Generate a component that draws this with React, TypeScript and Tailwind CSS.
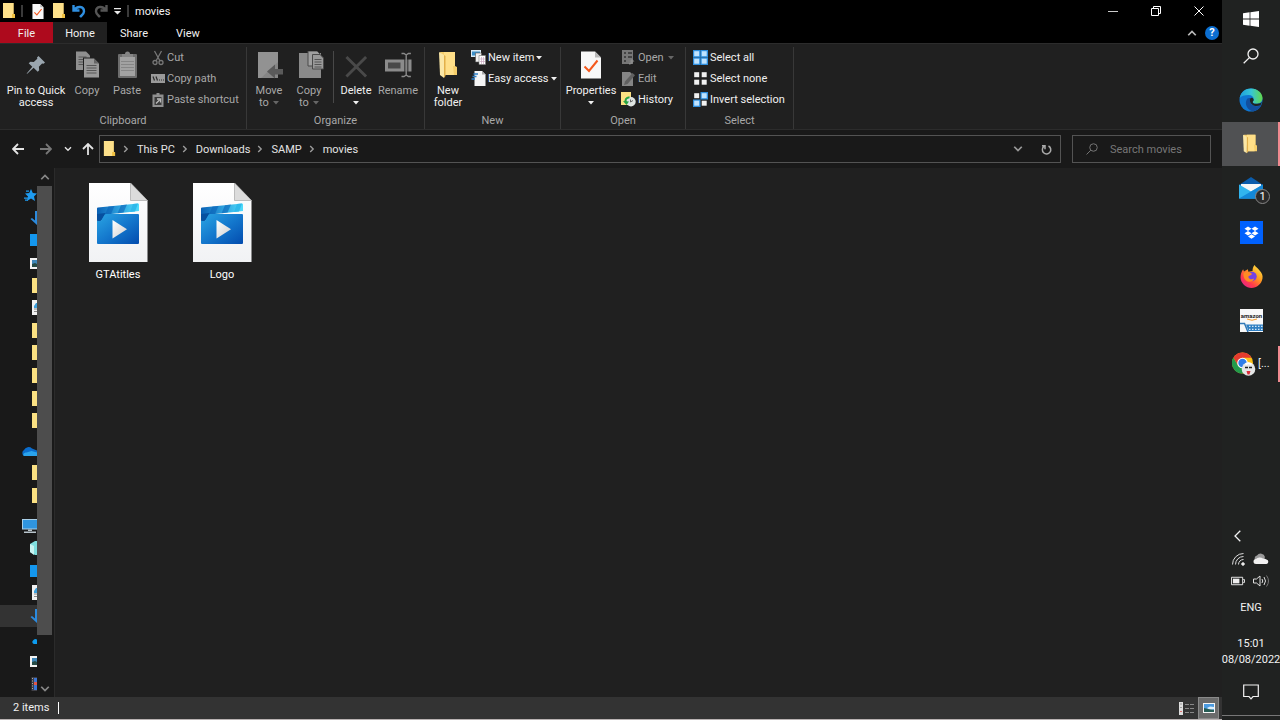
import { useState } from "react";
import type { ReactNode } from "react";

type IconProps = { className?: string };

type SmallAction = {
  label: string;
  icon: ReactNode;
  muted?: boolean;
  caret?: boolean;
};

const TABS = ["Home", "Share", "View"];
const CRUMBS = ["This PC", "Downloads", "SAMP", "movies"];
const FILES = ["GTAtitles", "Logo"];

/* ---------- icons ---------- */

function FolderIcon({ className = "h-4 w-3.5" }: IconProps) {
  return (
    <svg viewBox="0 0 14 16" className={className} preserveAspectRatio="none">
      <path d="M1 0h10.5v11.5H13V15H1z" fill="#f5cf5e" />
      <path d="M1 0h10.5v11H10V15H1z" fill="#fde08a" />
      <path d="M10 15v-4h3v4z" fill="#f0c040" />
    </svg>
  );
}

function OpenFolderIcon({ className }: IconProps) {
  return (
    <svg viewBox="0 0 18 28" className={className} preserveAspectRatio="none">
      <path d="M1 1h15v14l2 1v8H6z" fill="#f7cf6b" />
      <path d="M5 1h11v14h-2l1 9H5z" fill="#ffdf88" />
      <path d="M0 1l5 3v23l-4-3z" fill="#fbe7a6" />
      <path d="M5 4v23l1.500-2V5z" fill="#e2b04a" />
    </svg>
  );
}

function CheckPageIcon({ className }: IconProps) {
  return (
    <svg viewBox="0 0 20 27" className={className}>
      <path d="M0 0h14l6 6v21H0z" fill="#f8f8f8" />
      <path d="M14 0v6h6z" fill="#b9b9b9" />
      <path d="M3.500 15l4.500 4.500L16.500 9" fill="none" stroke="#f4581c" strokeWidth="2" />
    </svg>
  );
}

function Caret({ className = "" }: IconProps) {
  return (
    <svg viewBox="0 0 6 4" className={`h-1 w-1.5 shrink-0 ${className}`}>
      <path d="M0 0h6L3 3.500z" fill="currentColor" />
    </svg>
  );
}

function Chevron({ className = "" }: IconProps) {
  return (
    <svg viewBox="0 0 8 8" className={className} fill="none" stroke="currentColor" strokeWidth="1.400">
      <path d="M1 2.200l3 3 3-3" />
    </svg>
  );
}

function PinIcon() {
  return (
    <svg viewBox="0 0 20 20" className="mt-1 h-5 w-5">
      <path d="M12.500 1L19 7.500l-1.500 1.300-1.400-.4-3.200 3.400.3 3.400-1.500 1.500-4.100-4L1.500 18.500.6 19l.5-1 5.200-6.200-3.600-3.600 1.700-1.500 3.400.2 3.500-3.200-.3-1.200z" fill="#9aa6af" />
    </svg>
  );
}

function CopyIcon() {
  return (
    <svg viewBox="0 0 23 27" className="h-[27px] w-[23px]">
      <path d="M0 .5h10l4 4V19H0z" fill="#8f8f8f" />
      <path d="M2.500 6h8M2.500 8.500h8M2.500 11h8M2.500 13.500h8" stroke="#555" />
      <g transform="translate(8 7.500)">
        <path d="M-1-1h11.500l5 5v16H-1z" fill="#202020" />
        <path d="M0 0h10l5 5v14H0z" fill="#999" />
        <path d="M10 0v5h5z" fill="#666" />
        <path d="M2.500 7h10M2.500 9.500h10M2.500 12h10M2.500 14.500h10" stroke="#575757" />
      </g>
    </svg>
  );
}

function PasteIcon() {
  return (
    <svg viewBox="0 0 19 27" className="h-[27px] w-[19px]">
      <rect y="3" width="19" height="24" rx="1" fill="#6d6d6d" />
      <rect x="2" y="6" width="15" height="19" fill="#a2a2a2" />
      <path d="M4 6V3h3a2.500 2.500 0 0 1 5 0h3v3z" fill="#858585" />
      <path d="M3 10.500h13M3 13.500h13M3 16.500h13M3 19.500h13" stroke="#868686" />
    </svg>
  );
}

function ScissorsIcon() {
  return (
    <svg viewBox="0 0 14 16" className="h-4 w-3.5" fill="none" stroke="#777" strokeWidth="1.300">
      <path d="M3.500 1l5.500 10M10.500 1L5 11" />
      <circle cx="4" cy="12.500" r="2" />
      <circle cx="10" cy="12.500" r="2" />
    </svg>
  );
}

function CopyPathIcon() {
  return (
    <svg viewBox="0 0 14 9" className="h-[9px] w-3.5">
      <path d="M0 0h14v9H0z" fill="#9a9a9a" />
      <path d="M2 2.500l1.500 4M5 2.500l1.500 4M8 6h1M10 6h1M12 6h1" stroke="#2b2b2b" strokeWidth="1.200" />
    </svg>
  );
}

function PasteShortcutIcon() {
  return (
    <svg viewBox="0 0 12 14" className="h-3.5 w-3">
      <path d="M.5 1.500h4V0h3v1.500h4V14H.5z" fill="#8f8f8f" />
      <path d="M2.500 4h7v8h-7z" fill="#3a3a3a" />
      <path d="M4 10.500L7.500 7M5 6h3.500v3.500" fill="none" stroke="#bbb" strokeWidth="1.300" />
    </svg>
  );
}

function MoveToIcon() {
  return (
    <svg viewBox="0 0 25 28" className="ml-0.5 h-7 w-[25px]">
      <path d="M0 1h20v26H0z" fill="#858585" />
      <path d="M0 1h20v10L3 27H0z" fill="#929292" />
      <path d="M9 20.500l8-7v4.500h8v5.500h-8V27.500z" fill="#5a5a5a" />
    </svg>
  );
}

function CopyToIcon() {
  return (
    <svg viewBox="0 0 25 28" className="ml-1 h-7 w-[25px]">
      <path d="M0 2h22v25H0z" fill="#8a8a8a" />
      <path d="M9 0h9l3 3v12H9z" fill="#a0a0a0" stroke="#4a4a4a" />
      <path d="M13.500 3.500h7.500l3.500 3.500v11h-11z" fill="#999" stroke="#4a4a4a" />
      <path d="M15.500 8.500h7M15.500 11h7M15.500 13.500h7M15.500 16h7" stroke="#555" />
    </svg>
  );
}

function DeleteIcon() {
  return (
    <svg viewBox="0 0 24 24" className="mt-1 h-[23px] w-[23px]">
      <path d="M1.500 2L22 22.500M22 2L1.500 22.500" stroke="#494949" strokeWidth="3" />
    </svg>
  );
}

function RenameIcon() {
  return (
    <svg viewBox="0 0 27 27" className="h-[27px] w-[27px]">
      <path d="M0 8.500h26.500v12H0z" fill="#8b8b8b" />
      <path d="M3 11.500h12.500v6H3z" fill="#484848" />
      <path d="M19 8h4.500v13H19z" fill="#202020" opacity=".6" />
      <path d="M16.500 2.500h2.500l2.200 1.500 2.200-1.500h2.500M21.200 4v20M16.500 25.500h2.500l2.200-1.500 2.200 1.500h2.500" fill="none" stroke="#8a8a8a" strokeWidth="1.400" />
    </svg>
  );
}

function NewItemIcon() {
  return (
    <svg viewBox="0 0 15 15" className="h-[15px] w-[15px]">
      <path d="M0 0h10v7H0z" fill="#d9ebf6" />
      <path d="M1 1.500h8v4H1z" fill="#3b8fc8" />
      <path d="M4.500 3h6v9h-6z" fill="#f2f2f2" stroke="#555" strokeWidth=".6" />
      <path d="M8 5.500h6.500v9H8z" fill="#fff" stroke="#777" strokeWidth=".6" />
      <path d="M9 9h5M9 11.500h5M10.500 7v7M12.500 7v7" stroke="#c9a8c0" strokeWidth=".7" />
    </svg>
  );
}

function EasyAccessIcon() {
  return (
    <svg viewBox="0 0 14 15" className="h-[15px] w-[15px]">
      <path d="M3 0h7.500L14 3.500V15H3z" fill="#f4f4f4" />
      <path d="M10.500 0v3.500H14z" fill="#aaa" />
      <path d="M2 3h4.500M1 5.500h4M0 8h3.500" stroke="#2f80c8" strokeWidth="1.400" />
    </svg>
  );
}

function OpenIcon() {
  return (
    <svg viewBox="0 0 13 15" className="h-[15px] w-[13px]">
      <path d="M0 0h11v14H0z" fill="#777" />
      <path d="M2 2h2v2H2zM2 6h2v2H2zM2 10h2v2H2zM6 2h4v2H6zM6 6h4v2H6z" fill="#444" />
      <path d="M7 14.500v-1.500q2 0 2-1.500H7.500L10 9l2.500 2.500H11q0 3-4 3z" fill="#8c8c8c" />
    </svg>
  );
}

function EditIcon() {
  return (
    <svg viewBox="0 0 13 15" className="h-[15px] w-[13px]">
      <path d="M0 1h8l3 3v11H0z" fill="#858585" />
      <path d="M2 14l1-3.500L10.500 2l2.500 2.200L5.500 13z" fill="#606060" />
    </svg>
  );
}

function HistoryIcon() {
  return (
    <svg viewBox="0 0 15 15" className="h-[15px] w-[15px]">
      <path d="M0 0h10v13H0z" fill="#fbe183" />
      <circle cx="10" cy="9.800" r="4.700" fill="#dfe5e3" />
      <path d="M9.500 7.500V10l2.500-1.500" fill="none" stroke="#666" />
      <path d="M8.500 5.200C5 5.500 3.800 8 5 10.500" fill="none" stroke="#27a344" strokeWidth="2" />
      <path d="M2 9l6 .5L5.500 13z" fill="#27a344" />
    </svg>
  );
}

function SelectIcon({ filled }: { filled: boolean[] }) {
  return (
    <svg viewBox="0 0 15 15" className="h-[15px] w-[15px]">
      {filled.map((on, i) => {
        const x = (i % 2) * 7.5;
        const y = i > 1 ? 7.5 : 0;
        return (
          <g key={i}>
            {on && <rect x={x} y={y} width="7.500" height="7.500" fill="#2f8fdf" />}
            <rect x={x + 1.2} y={y + 1.2} width="5" height="5" fill={on ? "#bfe3ff" : "#f1f1f1"} />
          </g>
        );
      })}
    </svg>
  );
}

function SearchIcon({ className }: IconProps) {
  return (
    <svg viewBox="0 0 16 16" className={className} fill="none" stroke="currentColor" strokeWidth="1.300">
      <circle cx="10" cy="6" r="5" />
      <path d="M6.400 9.600L.7 15.300" />
    </svg>
  );
}

function ArrowIcon({ className }: IconProps) {
  return (
    <svg viewBox="0 0 12 12" className={className} fill="none" stroke="currentColor" strokeWidth="1.800">
      <path d="M12 6H1.500M6 1L1 6l5 5" />
    </svg>
  );
}

function VideoFileIcon() {
  return (
    <svg viewBox="0 0 59 80" className="h-20 w-[59px]">
      <defs>
        <linearGradient id="page" x2="0" y2="1">
          <stop stopColor="#fff" />
          <stop offset="1" stopColor="#f1f2f4" />
        </linearGradient>
        <linearGradient id="clip" x2="1" y2="1">
          <stop stopColor="#2aa5e3" />
          <stop offset=".5" stopColor="#1478cd" />
          <stop offset="1" stopColor="#034cae" />
        </linearGradient>
        <linearGradient id="band">
          <stop stopColor="#0960b4" />
          <stop offset=".5" stopColor="#2b9ddc" />
          <stop offset="1" stopColor="#4fdcfb" />
        </linearGradient>
        <linearGradient id="play" x2="1" y2="1">
          <stop stopColor="#fff" />
          <stop offset="1" stopColor="#cfcfcf" />
        </linearGradient>
      </defs>
      <path d="M0 0h41.500L58.500 17.500V79H0z" fill="url(#page)" />
      <path d="M41.500 0v17.500h17z" fill="#dcdcdc" stroke="#a8a8a8" strokeWidth=".7" />
      <path d="M9 24.500L49 20.500q1 0 1 1V28L18 31.500 12 38H9q-1 0-1-1V25.500q0-1 1-1z" fill="url(#band)" />
      <path d="M8 31l8.500-1L12.500 37q-.5 1-1.500 1H9q-1 0-1-1z" fill="#06509f" />
      <path d="M19.500 23.500l6-.6-3.500 8-6 .7zM32 22.200l6-.6-3.500 8-6 .7z" fill="#0a62b8" opacity=".6" />
      <path d="M44 21l5-.5-3 8-5 .5z" fill="#2fb9ea" />
      <path d="M17.500 31H49q1 0 1 1v28q0 1-1 1H9q-1 0-1-1V38h3q1 0 1.500-1l3-5q.700-1 2-1z" fill="url(#clip)" />
      <path d="M23.500 37L38 46.200 23.500 55.500z" fill="url(#play)" />
    </svg>
  );
}

function EdgeIcon() {
  return (
    <svg viewBox="0 0 24 24" className="h-6 w-6">
      <defs>
        <linearGradient id="edgeTop">
          <stop stopColor="#1d9fdc" />
          <stop offset=".5" stopColor="#36c5d6" />
          <stop offset="1" stopColor="#62d94a" />
        </linearGradient>
      </defs>
      <circle cx="12" cy="12" r="11.500" fill="#0f76d2" />
      <path d="M.7 10C2 3.500 6.500.5 12 .5 18.500.5 23.500 5 23.500 10c0 3.500-2.500 5.700-5.800 5.700-3 0-4.200-1-4-2 .2-.7 1-1 1-2.700 0-2-2-4-5-4C5.500 7 2 8 .7 10z" fill="url(#edgeTop)" />
      <path d="M8 11c-3 5 .5 11 5.500 12.300 4-.3 7.200-2.500 8.800-5.500.2-.6-.3-.8-.8-.5-5 2.500-10.500-.5-10.500-4.300 0-1.500 1-2.500 1.500-3-2-.2-3.500 0-4.500 1z" fill="#124f9e" />
      <path d="M11 13c-.3-2 .5-3 1.700-3.300 1.500.3 2 1.300 2 2.300 0 1-1 1.300-1 2 0 1.300 2 2.200 4.500 1.700 2.500 0 4-.8 5-2L21.500 17.300c-5 2.200-10.200-.5-10.500-4.300z" fill="#202322" />
    </svg>
  );
}

function MailIcon() {
  return (
    <svg viewBox="0 0 24 22" className="h-[22px] w-6">
      <path d="M0 8L12 0l12 8v13.500H0z" fill="#0b5cab" />
      <path d="M2 7h20v8H2z" fill="#f6f6f6" />
      <path d="M0 7.500l12 7 12-7v14H0z" fill="#31b4ee" />
      <path d="M0 21.500L24 7.500v14z" fill="#1388d8" />
    </svg>
  );
}

function DropboxIcon() {
  return (
    <svg viewBox="0 0 23 23" className="h-[23px] w-[23px]">
      <path d="M0 0h23v23H0z" fill="#0061fe" />
      <path d="M8 5.500l3.500 2.300L8 10 4.500 7.800zM15 5.500l3.500 2.300L15 10l-3.500-2.200zM8 10l3.500 2.300L8 14.500l-3.500-2.200zM15 10l3.500 2.300-3.500 2.200-3.500-2.200zM11.500 13.200l3.500 2.200-3.500 2.300L8 15.400z" fill="#fff" />
    </svg>
  );
}

function FirefoxIcon() {
  return (
    <svg viewBox="0 0 22 22" className="h-[23px] w-[23px]">
      <defs>
        <linearGradient id="fox" x1="1" x2=".2" y2="1">
          <stop stopColor="#fff44f" />
          <stop offset=".45" stopColor="#ff9a1f" />
          <stop offset=".75" stopColor="#ff3b4a" />
          <stop offset="1" stopColor="#e5238b" />
        </linearGradient>
      </defs>
      <path d="M14 0c1 2 3 3 4.500 5C21 7.500 22 10 21.500 13 20.500 18.500 16 22 11 22S.5 17.500.5 12C.5 9 1.500 6 3 4l.8 2.300L7.500 4l.5 2.500 4-.8C12 3.500 12.500 1.500 14 0z" fill="url(#fox)" />
      <circle cx="11.500" cy="11" r="4.500" fill="#7542e5" />
      <path d="M3.500 7.500c3-1.500 6-1 8 1-1 1.500-3 1.500-3.500 2.500 0 2.500 3 3.500 5.500 2-1 3.500-5.500 4-8 1.500C3.500 13 3 10 3.500 7.500z" fill="#ff8b23" />
    </svg>
  );
}

function AmazonIcon() {
  return (
    <svg viewBox="0 0 23 23" className="h-[23px] w-[23px]">
      <path d="M0 0h23v23H0z" fill="#f8f8f8" />
      <text x="11.500" y="8.500" textAnchor="middle" fontSize="6" fontWeight="700" fill="#222">amazon</text>
      <path d="M7 10q5 2.500 10 0" fill="none" stroke="#f39a2b" />
      <path d="M0 14.500h4.500l3.500 8.500" fill="none" stroke="#3279b7" strokeWidth="1.500" />
      <path d="M6 15.500H23V22H8.500z" fill="#2f7fc2" />
      <path d="M9 17.300h14M9 20.300h14" stroke="#d5e7f4" strokeWidth="1.200" strokeDasharray="1.500 1.500" />
    </svg>
  );
}

function ChromeIcon() {
  return (
    <svg viewBox="0 0 24 24" className="h-6 w-6 shrink-0">
      <circle cx="10.500" cy="11" r="10.500" fill="#fbc116" />
      <path d="M1.400 5.700A10.500 10.500 0 0 1 19.600 5.700H10.500L6 13.600z" fill="#e33b2e" />
      <path d="M1.400 5.700A10.500 10.500 0 0 0 10.500 21.500L15 13.600H6z" fill="#229a4b" />
      <circle cx="10.500" cy="11" r="5.300" fill="#fff" />
      <circle cx="10.500" cy="11" r="4.200" fill="#2e7de9" />
      <circle cx="16.500" cy="17" r="6.800" fill="#e4e6e6" />
      <path d="M13 15.500h3M17 15.500h3" stroke="#222" strokeWidth="1.500" />
      <path d="M14.500 19h4l-1 3.500h-2z" fill="#d92f3a" />
      <path d="M13.500 12.500q3-2.500 6 0" fill="none" stroke="#fff" strokeWidth="2" />
    </svg>
  );
}

/* ---------- ribbon ---------- */

function BigButton({
  icon,
  lines,
  width,
  muted,
  caret,
}: {
  icon: ReactNode;
  lines: string[];
  width: string;
  muted?: boolean;
  caret?: "below" | "inline";
}) {
  return (
    <button
      type="button"
      className={`flex h-full shrink-0 flex-col items-center ${width} ${muted ? "text-[#a8a8a8]" : "text-[#f0f0f0]"}`}
    >
      <span className="flex h-[34px] shrink-0 items-start justify-center">{icon}</span>
      {lines.map((line, i) => (
        <span key={line} className="flex items-center gap-1 leading-3 whitespace-nowrap">
          {line}
          {caret === "inline" && i === lines.length - 1 && <Caret className="text-[#666]" />}
        </span>
      ))}
      {caret === "below" && <Caret className="mt-1" />}
    </button>
  );
}

function SmallButtons({ actions, className = "" }: { actions: SmallAction[]; className?: string }) {
  return (
    <div className={`-mt-1 flex flex-col ${className}`}>
      {actions.map((action) => (
        <button
          key={action.label}
          type="button"
          className={`flex h-[21px] items-center gap-0.5 whitespace-nowrap ${
            action.muted ? "text-[#a8a8a8]" : "text-[#f0f0f0]"
          }`}
        >
          <span className="flex w-[15px] items-center justify-center">{action.icon}</span>
          <span className="pt-px">{action.label}</span>
          {action.caret && <Caret className={action.muted ? "ml-0.5 text-[#666]" : ""} />}
        </button>
      ))}
    </div>
  );
}

function RibbonGroup({
  name,
  width,
  padding,
  children,
}: {
  name: string;
  width: string;
  padding: string;
  children: ReactNode;
}) {
  return (
    <section className={`flex shrink-0 flex-col border-r border-[#383838] ${width}`}>
      <div className={`flex h-[67px] pt-1 ${padding}`}>{children}</div>
      <h2 className="text-center leading-4 text-[#a8a8a8]">{name}</h2>
    </section>
  );
}

function Ribbon() {
  return (
    <div className="flex h-[87px] border-t border-b border-[#2c2c2c] bg-[#202020] pt-[3px]">
      <RibbonGroup name="Clipboard" width="w-[247px]" padding="pl-[5px]">
        <BigButton icon={<PinIcon />} lines={["Pin to Quick", "access"]} width="w-[62px]" />
        <BigButton icon={<CopyIcon />} lines={["Copy"]} width="w-10" muted />
        <BigButton icon={<PasteIcon />} lines={["Paste"]} width="w-10" muted />
        <SmallButtons
          className="ml-[3px]"
          actions={[
            { label: "Cut", icon: <ScissorsIcon />, muted: true },
            { label: "Copy path", icon: <CopyPathIcon />, muted: true },
            { label: "Paste shortcut", icon: <PasteShortcutIcon />, muted: true },
          ]}
        />
      </RibbonGroup>
      <RibbonGroup name="Organize" width="w-[178px]" padding="pl-0.5">
        <BigButton icon={<MoveToIcon />} lines={["Move", "to"]} width="w-10" muted caret="inline" />
        <BigButton icon={<CopyToIcon />} lines={["Copy", "to"]} width="w-10" muted caret="inline" />
        <div className="ml-1 h-13 w-px bg-[#484848]" />
        <BigButton icon={<DeleteIcon />} lines={["Delete"]} width="w-11" caret="below" />
        <BigButton icon={<RenameIcon />} lines={["Rename"]} width="w-10" muted />
      </RibbonGroup>
      <RibbonGroup name="New" width="w-[136px]" padding="pl-[3px]">
        <BigButton icon={<OpenFolderIcon className="h-7 w-[18px]" />} lines={["New", "folder"]} width="w-10" />
        <SmallButtons
          className="ml-[3px]"
          actions={[
            { label: "New item", icon: <NewItemIcon />, caret: true },
            { label: "Easy access", icon: <EasyAccessIcon />, caret: true },
          ]}
        />
      </RibbonGroup>
      <RibbonGroup name="Open" width="w-[125px]" padding="pl-[3px]">
        <BigButton icon={<CheckPageIcon className="h-7 w-5" />} lines={["Properties"]} width="w-[54px]" caret="below" />
        <SmallButtons
          className="ml-[3px]"
          actions={[
            { label: "Open", icon: <OpenIcon />, muted: true, caret: true },
            { label: "Edit", icon: <EditIcon />, muted: true },
            { label: "History", icon: <HistoryIcon /> },
          ]}
        />
      </RibbonGroup>
      <RibbonGroup name="Select" width="w-[108px]" padding="pl-[7px]">
        <SmallButtons
          actions={[
            { label: "Select all", icon: <SelectIcon filled={[true, true, true, true]} /> },
            { label: "Select none", icon: <SelectIcon filled={[false, false, false, false]} /> },
            { label: "Invert selection", icon: <SelectIcon filled={[false, true, true, false]} /> },
          ]}
        />
      </RibbonGroup>
    </div>
  );
}

/* ---------- window chrome ---------- */

function TitleBar() {
  return (
    <header className="flex h-[22px] items-center bg-black">
      <div className="flex items-center pl-0.5">
        <FolderIcon />
        <span className="mx-[5px] h-3 w-0.5 bg-[#3a3a3a]" />
        <button type="button" aria-label="Properties" className="ml-1">
          <CheckPageIcon className="h-[15px] w-3" />
        </button>
        <button type="button" aria-label="New folder" className="ml-2">
          <FolderIcon />
        </button>
        <button type="button" aria-label="Undo" className="ml-1.5">
          <svg viewBox="0 0 14 14" className="h-3.5 w-3.5" fill="none" stroke="#2f8fe0" strokeWidth="2.400">
            <path d="M1.500 1v5.500h6M2 6.500C5 1.500 12 2 12 7.500c0 2.500-2 3.500-4 5.500" />
          </svg>
        </button>
        <button type="button" aria-label="Redo" className="ml-2">
          <svg viewBox="0 0 14 14" className="h-3.5 w-3.5" fill="none" stroke="#555" strokeWidth="2.400">
            <path d="M12.500 1v5.500h-6M12 6.500C9 1.500 2 2 2 7.500c0 2.500 2 3.500 4 5.500" />
          </svg>
        </button>
        <button type="button" aria-label="Customize Quick Access Toolbar" className="ml-1.5">
          <svg viewBox="0 0 7 7" className="h-[7px] w-[7px]" fill="#e8e8e8">
            <path d="M0 0h7v1.200H0zM0 3h7L3.500 6.500z" />
          </svg>
        </button>
        <span className="mx-1.5 h-3 w-0.5 bg-[#3a3a3a]" />
      </div>
      <h1 className="pt-0.5 text-[#f5f5f5]">movies</h1>
      <div className="ml-auto flex h-full pr-0.5 text-white">
        <button type="button" aria-label="Minimize" className="flex w-[43px] items-center justify-center">
          <span className="h-px w-2.5 bg-[#ccc]" />
        </button>
        <button type="button" aria-label="Restore" className="flex w-[43px] items-center justify-center">
          <svg viewBox="0 0 10 10" className="h-2.5 w-2.5" fill="none" stroke="currentColor">
            <path d="M.5 2.500h7v7h-7zM2.500 2.500v-2h7v7h-2" />
          </svg>
        </button>
        <button type="button" aria-label="Close" className="flex w-[43px] items-center justify-center">
          <svg viewBox="0 0 10 10" className="h-2.5 w-2.5" stroke="currentColor">
            <path d="M.5.5l9 9M9.500.5l-9 9" />
          </svg>
        </button>
      </div>
    </header>
  );
}

function TabBar({ active, onSelect }: { active: string; onSelect: (tab: string) => void }) {
  return (
    <nav className="flex h-[21px] bg-black text-[#f0f0f0]">
      <button type="button" className="w-[53px] bg-[#ae0a1d] pt-0.5">
        File
      </button>
      {TABS.map((tab) => (
        <button
          key={tab}
          type="button"
          onClick={() => onSelect(tab)}
          className={`w-[54px] pt-0.5 ${tab === active ? "bg-[#202020]" : ""}`}
        >
          {tab}
        </button>
      ))}
      <div className="ml-auto flex items-center gap-2 pr-[3px]">
        <button type="button" aria-label="Minimize the Ribbon" className="text-[#bbb]">
          <Chevron className="h-2.5 w-2.5 rotate-180" />
        </button>
        <button
          type="button"
          aria-label="Help"
          className="h-3.5 w-3.5 rounded-full bg-[#0c6ed0] leading-3.5 font-bold text-white"
        >
          ?
        </button>
      </div>
    </nav>
  );
}

function AddressBar() {
  const [query, setQuery] = useState("");

  return (
    <div className="flex h-[38px] items-center bg-[#191919] pr-[11px] pl-3 text-[#e4e4e4]">
      <button type="button" aria-label="Back">
        <ArrowIcon className="h-3 w-3" />
      </button>
      <button type="button" aria-label="Forward" className="ml-4 text-[#777]">
        <ArrowIcon className="h-3 w-3 rotate-180" />
      </button>
      <button type="button" aria-label="Recent locations" className="ml-3">
        <Chevron className="h-2 w-2" />
      </button>
      <button type="button" aria-label="Up" className="ml-2.5">
        <ArrowIcon className="h-3 w-3 rotate-90" />
      </button>
      <div className="ml-[5px] flex h-7 min-w-0 flex-1 items-center border border-[#535353] pl-[3px]">
        <FolderIcon className="h-4 w-[13px]" />
        {CRUMBS.map((crumb) => (
          <span key={crumb} className="flex items-center">
            <Chevron className="mr-[7px] ml-1.5 h-2 w-2 -rotate-90 text-[#999]" />
            <button type="button" className="pt-0.5">
              {crumb}
            </button>
          </span>
        ))}
        <button type="button" aria-label="Previous locations" className="ml-auto text-[#999]">
          <Chevron className="h-2.5 w-2.5" />
        </button>
        <button type="button" aria-label="Refresh" className="mr-2 ml-[18px] text-[#aaa]">
          <svg viewBox="0 0 11 11" className="h-[11px] w-[11px]" fill="none" stroke="currentColor" strokeWidth="1.500">
            <path d="M7.500 2a4.200 4.200 0 1 1-4.500.4M1 1.800h3v3.400" />
          </svg>
        </button>
      </div>
      <label className="ml-[11px] flex h-7 w-[139px] items-center border border-[#535353] pl-[13px] text-[#777]">
        <SearchIcon className="h-3 w-3 shrink-0" />
        <input
          type="search"
          aria-label="Search movies"
          placeholder="Search movies"
          value={query}
          onChange={(event) => setQuery(event.target.value)}
          className="ml-3 w-full min-w-0 bg-transparent pt-0.5 text-[#e4e4e4] outline-none placeholder:text-[#777]"
        />
      </label>
    </div>
  );
}

/* ---------- navigation pane ---------- */

function TreeIcon({ kind }: { kind: string }) {
  switch (kind) {
    case "folder":
      return <path d="M11 0h5v15h-5z" fill="#fbe183" />;
    case "star":
      return (
        <g fill="#1e9bf0">
          <path d="M10 2l1.800 4 4.200.5-3 3 1 4.500-4-2.500L6 14l1-4.500-3-3L8.200 6z" />
          <path d="M5 3.500h3v1.200H5zM3 10.500h4v1.200H3zM4 12.500h3v1.200H4z" />
        </g>
      );
    case "download":
      return <path d="M14 1h2v14L9.500 9l1.500-1 3 2.500z" fill="#2b8ade" />;
    case "desktop":
      return <path d="M9 2h7v12H9z" fill="#1497ee" />;
    case "picture":
      return (
        <>
          <path d="M9 3h7v11H9z" fill="#f3f3f3" />
          <path d="M11 5h5v7h-5z" fill="#3f86b8" />
          <path d="M11 9l3-1 2 1v3h-5z" fill="#264b46" />
        </>
      );
    case "document":
      return (
        <>
          <path d="M11 0h5v15h-5z" fill="#f1f1f1" />
          <path d="M13 9h3M13 11.500h3" stroke="#888" />
          <path d="M13 6l2-3h1v5h-3z" fill="#3d9fdb" />
        </>
      );
    case "cloud":
      return (
        <>
          <path d="M3 13a3.500 3.500 0 0 1 0-6A5 5 0 0 1 11 5.500l5 2V13z" fill="#0a6ccc" />
          <path d="M3 13C1.500 12 2.500 9.500 5.500 9.500l5-1.500 5.500 1.500V13z" fill="#2aa3ec" />
        </>
      );
    case "pc":
      return (
        <>
          <path d="M1 1h15v10.500H1z" fill="#a9cfe8" />
          <path d="M2 2h14v8.500H2z" fill="#2f95e0" />
          <path d="M7 11.500h4V13H7zM3 13.500h12V15H3z" fill="#b8c4cc" />
        </>
      );
    case "cube":
      return (
        <>
          <path d="M9 4l5-3h2v14h-2l-5-3z" fill="#7fe0e0" />
          <path d="M9 4l4 2v9l-4-3z" fill="#c9f4f2" />
        </>
      );
    case "music":
      return <path d="M16 8.500a3 3 0 0 0-4 1 2 2 0 0 0 1 3.500h3z" fill="#0d9cf0" />;
    default:
      return (
        <>
          <path d="M10.500 1H16v14h-5.500z" fill="#3f3f46" />
          <path d="M13 2h3v12h-3z" fill="#3b76d6" />
          <path d="M13 6h3v3h-3z" fill="#e0574a" />
          <path d="M11.500 2v12" stroke="#aaa" strokeDasharray="1 1.500" />
        </>
      );
  }
}

const TREE = [
  {
    size: "flex-[11]",
    items: ["star", "download", "desktop", "picture", "folder", "document", "folder", "folder", "folder", "folder", "folder"],
  },
  { size: "flex-[3]", items: ["cloud", "folder", "folder"] },
  { size: "flex-[8]", items: ["pc", "cube", "desktop", "document", "download", "music", "picture", "video"] },
];

function NavigationPane() {
  return (
    <aside className="flex w-[55px] shrink-0 border-r border-[#2b2b2b] bg-[#191919]">
      <div className="flex w-[37px] flex-col gap-[7px] pt-4 pb-0.5">
        {TREE.map((group, groupIndex) => (
          <ul key={group.size} className={`flex flex-col ${group.size}`}>
            {group.items.map((kind, i) => (
              <li
                key={i}
                className={`flex flex-1 items-center justify-end ${
                  groupIndex === 2 && kind === "download" ? "bg-[#333]" : ""
                }`}
              >
                <svg viewBox="0 0 16 16" className="h-4 w-4">
                  <TreeIcon kind={kind} />
                </svg>
              </li>
            ))}
          </ul>
        ))}
      </div>
      <div className="flex w-[15px] flex-col items-center text-[#888]">
        <button type="button" aria-label="Scroll up" className="flex h-[18px] items-center">
          <Chevron className="h-2.5 w-2.5 rotate-180" />
        </button>
        <div className="w-full flex-[10] bg-[#4d4d4d]" />
        <div className="w-full flex-1" />
        <button type="button" aria-label="Scroll down" className="flex h-[17px] items-center">
          <Chevron className="h-2.5 w-2.5" />
        </button>
      </div>
    </aside>
  );
}

function StatusBar() {
  return (
    <footer className="flex h-[23px] items-center border-b border-[#b9b3b3] bg-[#333] pl-[13px] text-[#f0f0f0]">
      <span className="border-r border-white pr-[9px] leading-3">2 items</span>
      <div className="ml-auto flex h-full items-center pr-[3px]">
        <button type="button" aria-label="Details view" className="mr-1">
          <svg viewBox="0 0 15 13" className="h-[13px] w-[15px]">
            <path d="M0 0h4v13H0z" fill="#ddd" />
            <path d="M1 2h2M1 5.500h2" stroke="#999" />
            <path d="M1 9.500h2" stroke="#e07070" />
            <path d="M6 2.500h4M11 2.500h4M6 6.500h4M11 6.500h4M6 10.500h4M11 10.500h4" stroke="#888" />
          </svg>
        </button>
        <button
          type="button"
          aria-label="Large thumbnails"
          className="flex h-full w-[21px] items-center justify-center border border-[#8a8a8a] bg-[#6b6b6b]"
        >
          <svg viewBox="0 0 12 10" className="h-2.5 w-3">
            <path d="M0 0h12v10H0z" fill="#f5f5f5" />
            <path d="M1 1h10v8H1z" fill="#4c9be0" />
            <path d="M4 5l3-1.500 4 .5v2l-4 1z" fill="#dceefa" />
            <path d="M1 5l4 1 6 1v2H1z" fill="#275d55" />
          </svg>
        </button>
      </div>
    </footer>
  );
}

/* ---------- taskbar ---------- */

function Taskbar() {
  const apps = [
    { name: "Microsoft Edge", icon: <EdgeIcon /> },
    {
      name: "File Explorer",
      icon: <OpenFolderIcon className="h-5 w-3.5" />,
      state: "border-r-2 border-[#f08a90] bg-[#505153]",
    },
    {
      name: "Mail",
      icon: (
        <span className="relative">
          <MailIcon />
          <span className="absolute top-3 left-4 flex h-[15px] w-[15px] items-center justify-center rounded-full border border-[#888] bg-[#2a2a2a] text-white">
            1
          </span>
        </span>
      ),
    },
    { name: "Dropbox", icon: <DropboxIcon /> },
    { name: "Firefox", icon: <FirefoxIcon /> },
    { name: "Amazon", icon: <AmazonIcon /> },
  ];

  return (
    <aside className="flex w-[58px] shrink-0 flex-col bg-[#202221] text-[#f2f2f2]">
      <button type="button" aria-label="Start" className="flex h-[38px] items-center justify-center">
        <svg viewBox="0 0 16 16" className="h-4 w-4" fill="#fff">
          <path d="M0 2.200l6.600-.9v6.300H0zM7.400 1.200L16 0v7.600H7.400zM0 8.400h6.600v6.300L0 13.800zM7.400 8.400H16V16l-8.600-1.200z" />
        </svg>
      </button>
      <button type="button" aria-label="Search" className="mb-1 flex h-9 items-center justify-center">
        <SearchIcon className="h-4 w-4" />
      </button>
      {apps.map((app) => (
        <button
          key={app.name}
          type="button"
          aria-label={app.name}
          className={`flex h-11 shrink-0 items-center justify-center ${app.state ?? ""}`}
        >
          {app.icon}
        </button>
      ))}
      <button type="button" className="flex h-11 shrink-0 items-center pl-2.5">
        <ChromeIcon />
        <span className="pl-0.5">[...</span>
        <span className="ml-auto h-9 w-0.5 bg-[#f08a90]" />
      </button>

      <div className="mt-auto flex flex-col items-center">
        <button type="button" aria-label="Show hidden icons" className="mr-7 mb-2.5 h-3">
          <svg viewBox="0 0 7 12" className="h-3 w-[7px]" fill="none" stroke="currentColor" strokeWidth="1.300">
            <path d="M6.300.8L1 6l5.300 5.200" />
          </svg>
        </button>
        <div className="mr-0.5 grid grid-cols-2 items-center gap-x-1.5 gap-y-2">
          <svg viewBox="0 0 14 14" className="h-3.5 w-3.5" fill="none" stroke="#ddd" aria-label="Network">
            <path d="M1.500 12.500a11 11 0 0 1 11-11M4.500 12.500a8 8 0 0 1 8-8M7.500 12.500a5 5 0 0 1 5-5" />
            <circle cx="12" cy="12" r="1.300" fill="#fff" />
          </svg>
          <svg viewBox="0 0 16 14" className="h-3.5 w-4" aria-label="OneDrive">
            <path d="M3 9a3 3 0 0 1 1-5.500A4.500 4.500 0 0 1 12 5l-2 5z" fill="#999" />
            <path d="M3 12a2.500 2.500 0 0 1 0-5 5 4.500 0 0 1 7-.5q2 0 3.500 1a2.300 2.300 0 0 1 0 4.500z" fill="#f1f1f1" />
          </svg>
          <svg viewBox="0 0 15 14" className="h-3.5 w-3.5" aria-label="Battery">
            <path d="M.5 3h12v8H.5zM13 5.500h1.500v3H13" fill="none" stroke="#eee" />
            <path d="M2 4.500h7v5H2z" fill="#eee" />
          </svg>
          <svg viewBox="0 0 16 14" className="h-3.5 w-4" fill="none" stroke="#ddd" aria-label="Volume">
            <path d="M.5 5h3L7 2v10L3.500 9h-3zM9 5q1.500 2 0 4M11 3q3 4 0 8" />
            <path d="M13.500 1.500q4 5.500 0 11" stroke="#777" />
          </svg>
        </div>
        <button type="button" className="mt-3 h-4 leading-4">
          ENG
        </button>
        <button type="button" className="mt-5 leading-4">
          15:01
          <br />
          08/08/2022
        </button>
        <button type="button" aria-label="Notifications" className="mt-4 mb-[15px]">
          <svg viewBox="0 0 16 16" className="h-4 w-4" fill="none" stroke="currentColor" strokeWidth="1.200">
            <path d="M.7 1h14.600v11.500H10L8 14.800 6 12.500H.7z" />
          </svg>
        </button>
        <span className="h-[5px] w-full border-t border-[#777]" />
      </div>
    </aside>
  );
}

export default function App() {
  const [tab, setTab] = useState("Home");

  return (
    <div className="flex min-h-screen bg-[#202020] font-[Roboto,sans-serif] text-[11px] leading-4">
      <div className="flex min-w-0 flex-1 flex-col">
        <TitleBar />
        <TabBar active={tab} onSelect={setTab} />
        <Ribbon />
        <AddressBar />
        <div className="flex flex-1">
          <NavigationPane />
          <main className="flex-1 bg-[#202020]">
            <ul className="flex flex-wrap pt-[15px] pl-[11px]">
              {FILES.map((file) => (
                <li key={file} className="flex w-[104px] flex-col items-center gap-1 text-white">
                  <VideoFileIcon />
                  <span>{file}</span>
                </li>
              ))}
            </ul>
          </main>
        </div>
        <StatusBar />
      </div>
      <Taskbar />
    </div>
  );
}
